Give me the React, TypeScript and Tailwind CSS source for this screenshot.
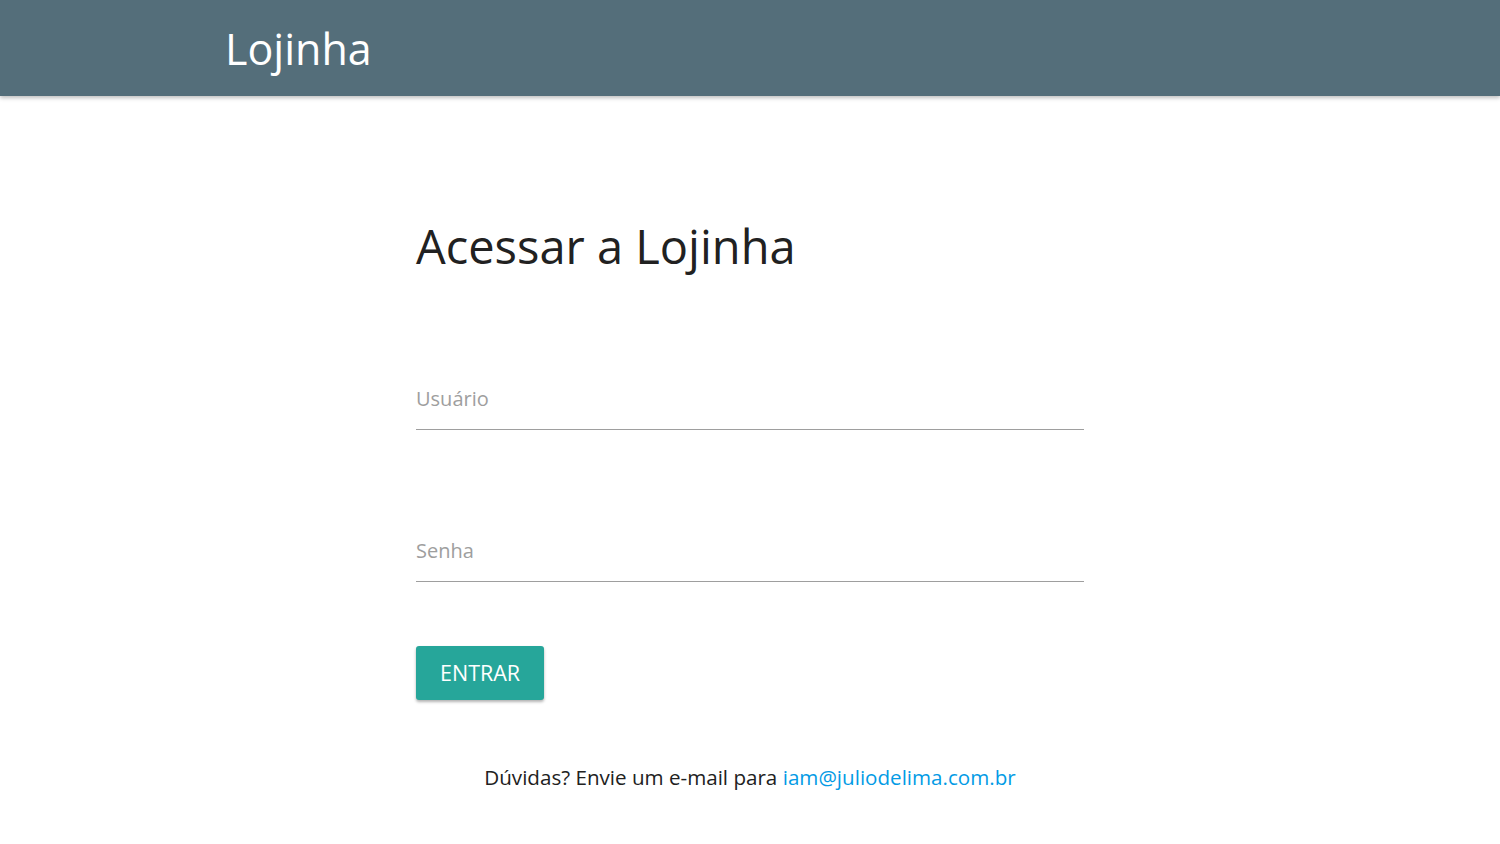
export default function App() {
  return (
    <div className="min-h-screen bg-white" style={{ fontFamily: '"Open Sans", "Noto Sans", sans-serif' }}>
      <nav className="h-[96px] bg-[#546e7a] shadow-[0_2px_4px_rgba(0,0,0,0.25)]">
        <div className="mx-auto w-[1050px] flex items-center h-full">
          <a href="#" className="text-white text-[43px] leading-none">
            Lojinha
          </a>
        </div>
      </nav>

      <main className="mx-auto w-[668px] pt-[115px]">
        <h1 className="text-[#212121] text-[47px] leading-[70px]">Acessar a Lojinha</h1>

        <form className="mt-[86px]" onSubmit={(e) => e.preventDefault()}>
          <div className="border-b border-[#9e9e9e] h-[63px] flex items-end pb-[15px]">
            <input
              type="text"
              placeholder="Usuário"
              className="w-full outline-none text-[20px] text-[#212121] placeholder:text-[#9e9e9e] bg-transparent"
            />
          </div>
          <div className="mt-[89px] border-b border-[#9e9e9e] h-[63px] flex items-end pb-[15px]">
            <input
              type="password"
              placeholder="Senha"
              className="w-full outline-none text-[20px] text-[#212121] placeholder:text-[#9e9e9e] bg-transparent"
            />
          </div>

          <button
            type="submit"
            className="mt-[64px] h-[54px] px-[24px] bg-[#26a69a] text-white text-[21.5px] rounded-[3px] shadow-[0_2px_3px_rgba(0,0,0,0.3)]"
          >
            ENTRAR
          </button>
        </form>

        <p className="mt-[62px] text-center text-[20.6px] text-[#212121]">
          Dúvidas? Envie um e-mail para{' '}
          <a href="#" className="text-[#039be5]">iam@juliodelima.com.br</a>
        </p>
      </main>
    </div>
  );
}
